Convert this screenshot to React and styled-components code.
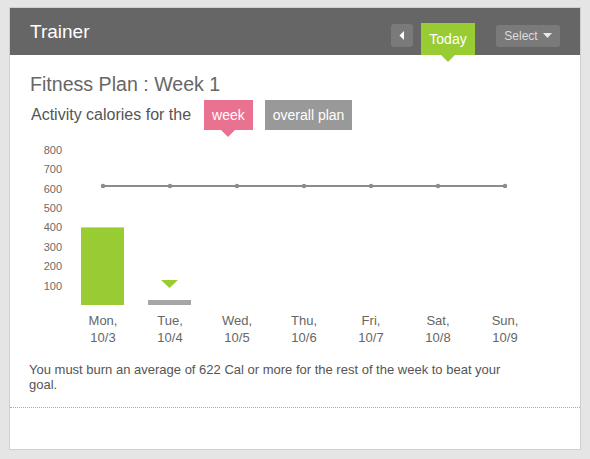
import React from 'react';
import styled, { createGlobalStyle } from 'styled-components';

const GlobalStyle = createGlobalStyle`
  body {
    margin: 0;
    background: #e5e5e5;
    font-family: "Liberation Sans", Arial, Helvetica, sans-serif;
  }
`;

const Card = styled.div`
  margin: 7px 0 0 9px;
  width: 570px;
  height: 441px;
  background: #fff;
  border: 1px solid #cfcfcf;
  display: flex;
  flex-direction: column;
`;

const Header = styled.div`
  height: 47px;
  background: #666;
  display: flex;
  align-items: center;
  padding: 0 20px 0 20px;
`;

const Title = styled.div`
  color: #fff;
  font-size: 19px;
  flex: 1;
`;

const Controls = styled.div`
  display: flex;
  align-items: center;
  height: 100%;
`;

const BackButton = styled.div`
  width: 22px;
  height: 23px;
  border-radius: 3px;
  background: #7a7a7a;
  display: flex;
  align-items: center;
  justify-content: center;
  margin-top: 8px;
`;

const TodayTab = styled.div`
  position: relative;
  align-self: flex-end;
  width: 54px;
  height: 32px;
  margin-left: 8px;
  background: #99cc33;
  color: #fff;
  font-size: 14px;
  display: flex;
  align-items: center;
  justify-content: center;
  &::after {
    content: '';
    position: absolute;
    left: 50%;
    bottom: -7px;
    margin-left: -7px;
    border-left: 7px solid transparent;
    border-right: 7px solid transparent;
    border-top: 7px solid #99cc33;
  }
`;

const SelectButton = styled.div`
  width: 64px;
  height: 22px;
  margin-left: 21px;
  margin-top: 8px;
  border-radius: 3px;
  background: #7a7a7a;
  color: #dcdcdc;
  font-size: 12px;
  display: flex;
  align-items: center;
  justify-content: center;
  gap: 5px;
`;

const Body = styled.div`
  padding: 18px 20px 0 20px;
`;

const PlanTitle = styled.div`
  font-size: 19.6px;
  color: #666;
  line-height: 23px;
`;

const FilterRow = styled.div`
  display: flex;
  align-items: center;
  margin-top: 4px;
  height: 30px;
`;

const FilterLabel = styled.span`
  font-size: 16px;
  color: #555;
  margin-left: 1px;
  margin-right: 13px;
`;

const Pill = styled.div`
  position: relative;
  height: 30px;
  padding: 0 8px;
  margin-right: 12px;
  background: ${p => (p.$active ? '#e8728f' : '#999')};
  color: #fff;
  font-size: 14px;
  display: flex;
  align-items: center;
  ${p => p.$active && `
    &::after {
      content: '';
      position: absolute;
      left: 50%;
      bottom: -7px;
      margin-left: -7px;
      border-left: 7px solid transparent;
      border-right: 7px solid transparent;
      border-top: 7px solid #e8728f;
    }
  `}
`;

const Chart = styled.svg`
  display: block;
  margin: 10px 0 0 -20px;
`;

const Note = styled.p`
  margin: 12px 0 0 -1px;
  max-width: 495px;
  font-size: 13px;
  line-height: 15px;
  color: #555;
`;

const Divider = styled.div`
  margin-top: 15px;
  border-top: 1px dotted #aaa;
`;

const days = [
  ['Mon,', '10/3'],
  ['Tue,', '10/4'],
  ['Wed,', '10/5'],
  ['Thu,', '10/6'],
  ['Fri,', '10/7'],
  ['Sat,', '10/8'],
  ['Sun,', '10/9'],
];

const ZERO = 165;
const SCALE = 0.194;
const yOf = v => ZERO - v * SCALE;

function WeekChart() {
  const ticks = [800, 700, 600, 500, 400, 300, 200, 100];
  const goalY = 46;
  return (
    <Chart width="570" height="210" viewBox="0 0 570 210">
      {ticks.map(t => (
        <text key={t} x="52" y={yOf(t) + 4} textAnchor="end" fontSize="11" fill="#6a6a6a"
          fontFamily="Liberation Sans, Arial, sans-serif">{t}</text>
      ))}
      <rect x="71" y={yOf(400)} width="43" height={400 * SCALE} fill="#99cc33" />
      <rect x="138" y="160" width="43" height="5" fill="#a6a6a6" />
      <polygon points="151,140 168,140 159.5,148" fill="#99cc33" />
      <line x1="93" y1={goalY} x2="495" y2={goalY} stroke="#8c8c8c" strokeWidth="2" />
      {days.map((d, i) => (
        <circle key={i} cx={93 + i * 67} cy={goalY} r="2.2" fill="#8c8c8c" />
      ))}
      {days.map(([a, b], i) => (
        <text key={a} x={93 + i * 67} textAnchor="middle" fontSize="13" fill="#666"
          fontFamily="Liberation Sans, Arial, sans-serif">
          <tspan x={93 + i * 67} y="185">{a}</tspan>
          <tspan x={93 + i * 67} y="202">{b}</tspan>
        </text>
      ))}
    </Chart>
  );
}

export default function App() {
  return (
    <>
      <GlobalStyle />
      <Card>
        <Header>
          <Title>Trainer</Title>
          <Controls>
            <BackButton>
              <svg width="6" height="9" viewBox="0 0 6 9">
                <polygon points="5,0 5,9 0.5,4.5" fill="#fff" />
              </svg>
            </BackButton>
            <TodayTab>Today</TodayTab>
            <SelectButton>
              Select
              <svg width="9" height="5" viewBox="0 0 9 5">
                <polygon points="0,0 9,0 4.5,5" fill="#e8e8e8" />
              </svg>
            </SelectButton>
          </Controls>
        </Header>
        <Body>
          <PlanTitle>Fitness Plan : Week 1</PlanTitle>
          <FilterRow>
            <FilterLabel>Activity calories for the</FilterLabel>
            <Pill $active>week</Pill>
            <Pill>overall plan</Pill>
          </FilterRow>
          <WeekChart />
          <Note>
            You must burn an average of 622 Cal or more for the rest of the week to beat your goal.
          </Note>
        </Body>
        <Divider />
      </Card>
    </>
  );
}
